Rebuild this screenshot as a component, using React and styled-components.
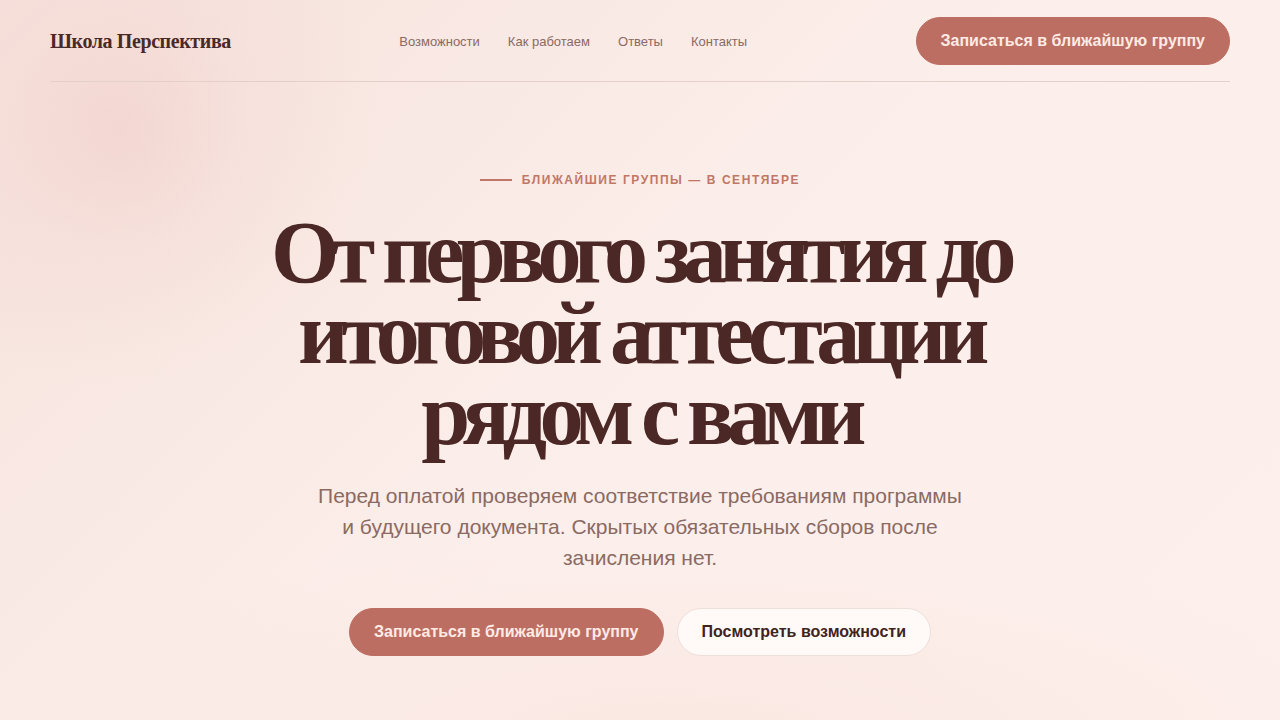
import React from "react";
import styled, { createGlobalStyle } from "styled-components";

const Global = createGlobalStyle`
  html, body { margin: 0; padding: 0; }
  body {
    min-height: 720px;
    font-family: "Liberation Sans", Arial, sans-serif;
    background:
      radial-gradient(circle at 120px 130px, rgba(240, 206, 200, 0.6) 0, rgba(243, 214, 208, 0.3) 120px, rgba(246, 222, 216, 0) 260px),
      radial-gradient(ellipse 720px 200px at 680px 740px, rgba(249, 228, 222, 0.7), rgba(253, 240, 236, 0) 100%),
      linear-gradient(135deg, #f6e0db 0%, #f9e9e4 28%, #fcefeb 55%, #fdf0ec 100%);
    overflow: hidden;
  }
`;

const Page = styled.div`
  min-height: 720px;
`;

const Header = styled.header`
  margin: 0 50px;
  padding: 17px 0 16px;
  border-bottom: 1px solid #e4cfca;
  display: flex;
  align-items: center;
  justify-content: space-between;
`;

const Logo = styled.div`
  font-family: "Liberation Serif", "Times New Roman", serif;
  font-weight: 700;
  font-size: 20px;
  letter-spacing: -0.02em;
  color: #4a2a26;
`;

const Nav = styled.nav`
  display: flex;
  gap: 28px;
`;

const NavLink = styled.a`
  font-size: 13px;
  color: #8a6a63;
  text-decoration: none;
`;

const Button = styled.a`
  display: inline-flex;
  align-items: center;
  justify-content: center;
  box-sizing: border-box;
  height: 48px;
  padding: 0 24px;
  border-radius: 24px;
  font-weight: 700;
  font-size: 16px;
  text-decoration: none;
  white-space: nowrap;
  background: ${(p) => (p.$variant === "ghost" ? "#fffaf8" : "#bd6e62")};
  color: ${(p) => (p.$variant === "ghost" ? "#3f2320" : "#fdeae4")};
  border: 1px solid ${(p) => (p.$variant === "ghost" ? "#eedfdb" : "#bd6e62")};
`;

const Hero = styled.main`
  display: flex;
  flex-direction: column;
  align-items: center;
  padding-top: 90px;
  text-align: center;
`;

const Eyebrow = styled.div`
  display: flex;
  align-items: center;
  gap: 10px;
  font-size: 12px;
  font-weight: 700;
  letter-spacing: 0.13em;
  text-transform: uppercase;
  color: #c07766;
  line-height: 16px;
  &::before {
    content: "";
    width: 32px;
    height: 2px;
    background: #c07766;
  }
`;

const Title = styled.h1`
  margin: 24px 0 0;
  max-width: 780px;
  font-family: "Liberation Serif", "Times New Roman", serif;
  font-weight: 700;
  font-size: 88px;
  line-height: 81px;
  letter-spacing: -0.086em;
  color: #4b2825;
`;

const Lead = styled.p`
  margin: 25px 0 0;
  max-width: 650px;
  font-size: 21px;
  line-height: 31px;
  color: #8a6a63;
`;

const Actions = styled.div`
  margin-top: 35px;
  display: flex;
  gap: 13px;
`;

export default function App() {
  return (
    <Page>
      <Global />
      <Header>
        <Logo>Школа Перспектива</Logo>
        <Nav>
          <NavLink href="#">Возможности</NavLink>
          <NavLink href="#">Как работаем</NavLink>
          <NavLink href="#">Ответы</NavLink>
          <NavLink href="#">Контакты</NavLink>
        </Nav>
        <Button href="#">Записаться в ближайшую группу</Button>
      </Header>
      <Hero>
        <Eyebrow>Ближайшие группы — в сентябре</Eyebrow>
        <Title>От первого занятия до итоговой аттестации рядом с вами</Title>
        <Lead>
          Перед оплатой проверяем соответствие требованиям программы и будущего документа.
          Скрытых обязательных сборов после зачисления нет.
        </Lead>
        <Actions>
          <Button href="#">Записаться в ближайшую группу</Button>
          <Button href="#" $variant="ghost">Посмотреть возможности</Button>
        </Actions>
      </Hero>
    </Page>
  );
}
